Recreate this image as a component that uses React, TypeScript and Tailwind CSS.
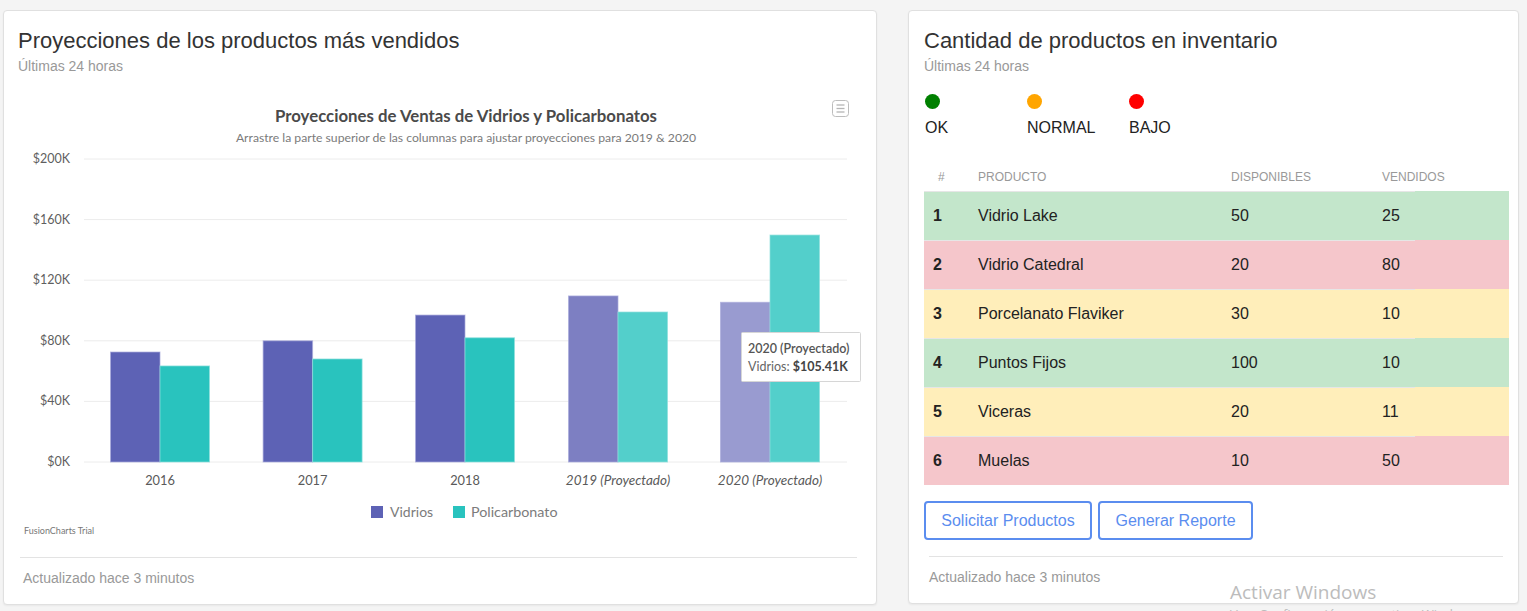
import React from "react";

const base = 372;
const k = 1.515;

type Cat = {
  label: string;
  c: number;
  v: number;
  p: number;
  italic: boolean;
  vf: string;
  pf: string;
};

const cats: Cat[] = [
  { label: "2016", c: 156, v: 72.6, p: 63.4, italic: false, vf: "#5d62b5", pf: "#29c3be" },
  { label: "2017", c: 308.6, v: 80, p: 68, italic: false, vf: "#5d62b5", pf: "#29c3be" },
  { label: "2018", c: 461, v: 97, p: 82, italic: false, vf: "#5d62b5", pf: "#29c3be" },
  { label: "2019 (Proyectado)", c: 614, v: 109.6, p: 99, italic: true, vf: "#7d7fc2", pf: "#53cfcb" },
  { label: "2020 (Proyectado)", c: 766, v: 105.41, p: 149.8, italic: true, vf: "#999bd0", pf: "#53cfcb" },
];

const ticks = [200, 160, 120, 80, 40, 0];

function Chart() {
  const font = "Lato, 'Open Sans', sans-serif";
  return (
    <svg width={872} height={455} className="block" style={{ fontFamily: font }}>
      <text x={462} y={32} textAnchor="middle" fontSize={16.8} fontWeight={700} fill="#4a4a4a">
        Proyecciones de Ventas de Vidrios y Policarbonatos
      </text>
      <text x={462} y={52} textAnchor="middle" fontSize={12.2} fill="#7b7b7b">
        Arrastre la parte superior de las columnas para ajustar proyecciones para 2019 &amp; 2020
      </text>
      {/* menu icon */}
      <rect x={828.5} y={10.5} width={16} height={16} rx={3} fill="#fff" stroke="#bdbdbd" />
      <line x1={832.5} x2={840.5} y1={15} y2={15} stroke="#b5b5b5" strokeWidth={1.3} />
      <line x1={832.5} x2={840.5} y1={18.5} y2={18.5} stroke="#b5b5b5" strokeWidth={1.3} />
      <line x1={832.5} x2={840.5} y1={22} y2={22} stroke="#b5b5b5" strokeWidth={1.3} />
      {ticks.map((t) => {
        const y = base - t * k;
        return (
          <g key={t}>
            <line x1={80} x2={843} y1={y} y2={y} stroke="#ececec" strokeWidth={1} />
            <text x={66} y={y + 4} textAnchor="end" fontSize={12.5} fill="#5f5f5f">
              ${t}K
            </text>
          </g>
        );
      })}
      {cats.map((c) => (
        <g key={c.label}>
          <rect
            x={c.c - 49.5}
            y={base - c.v * k}
            width={49.5}
            height={c.v * k}
            fill={c.vf}
            stroke="#a9abdc"
            strokeOpacity={0.7}
            strokeWidth={1}
          />
          <rect
            x={c.c}
            y={base - c.p * k}
            width={49.5}
            height={c.p * k}
            fill={c.pf}
            stroke="#8fe0dd"
            strokeOpacity={0.7}
            strokeWidth={1}
          />
          <text
            x={c.c}
            y={394.5}
            textAnchor="middle"
            fontSize={c.italic ? 13.5 : 12.8}
            fill="#5a5a5a"
            fontStyle={c.italic ? "italic" : "normal"}
          >
            {c.label}
          </text>
        </g>
      ))}
      {/* legend */}
      <rect x={367} y={416} width={12} height={12} fill="#5d62b5" />
      <text x={386} y={427} fontSize={14} fill="#7c7c7c">
        Vidrios
      </text>
      <rect x={449} y={416} width={12} height={12} fill="#29c3be" />
      <text x={467} y={427} fontSize={14.3} fill="#7c7c7c">
        Policarbonato
      </text>
      <text x={20} y={444} fontSize={9} fill="#777">
        FusionCharts Trial
      </text>
      {/* tooltip */}
      <rect x={737.5} y={242.5} width={119} height={49} fill="#fff" stroke="#d6d6d6" rx={1} />
      <text x={744} y={263} fontSize={12.5} fontWeight={600} fill="#555">
        2020 (Proyectado)
      </text>
      <text x={744} y={281} fontSize={12.5} fill="#666">
        Vidrios: <tspan fontWeight={700} fill="#444">$105.41K</tspan>
      </text>
    </svg>
  );
}

type Row = { n: number; name: string; disp: string; vend: string; bg: string };

const rows: Row[] = [
  { n: 1, name: "Vidrio Lake", disp: "50", vend: "25", bg: "bg-[#c3e6cb]" },
  { n: 2, name: "Vidrio Catedral", disp: "20", vend: "80", bg: "bg-[#f5c6cb]" },
  { n: 3, name: "Porcelanato Flaviker", disp: "30", vend: "10", bg: "bg-[#ffeeba]" },
  { n: 4, name: "Puntos Fijos", disp: "100", vend: "10", bg: "bg-[#c3e6cb]" },
  { n: 5, name: "Viceras", disp: "20", vend: "11", bg: "bg-[#ffeeba]" },
  { n: 6, name: "Muelas", disp: "10", vend: "50", bg: "bg-[#f5c6cb]" },
];

export default function App() {
  return (
    <div
      className="relative w-[1527px] h-[611px] overflow-hidden bg-[#f4f4f4] flex items-start pt-[10px] pl-[3px] gap-[31px] text-[#333]"
      style={{ fontFamily: "'Liberation Sans', Arial, sans-serif" }}
    >
      {/* Left card */}
      <div className="w-[874px] h-[595px] bg-white border border-[#e0e0e0] rounded-[4px] shadow-[0_1px_2px_rgba(0,0,0,0.05)] flex flex-col">
        <div className="h-[79px] pl-[14px] pt-[17px]">
          <div className="text-[22px] leading-[26px] text-[#333]">Proyecciones de los productos más vendidos</div>
          <div className="mt-[2px] text-[14px] leading-[20px] text-[#999]">Últimas 24 horas</div>
        </div>
        <Chart />
        <div className="mt-[12px] ml-[16px] mr-[19px] h-px bg-[#e3e3e3]" />
        <div className="pt-[10px] pl-[19px] text-[14px] leading-[20px] text-[#999]">Actualizado hace 3 minutos</div>
      </div>

      {/* Right card */}
      <div className="w-[611px] h-[594px] bg-white border border-[#e0e0e0] rounded-[4px] shadow-[0_1px_2px_rgba(0,0,0,0.05)] flex flex-col px-[15px]">
        <div className="pt-[17px]">
          <div className="text-[22px] leading-[26px] text-[#333]">Cantidad de productos en inventario</div>
          <div className="mt-[2px] text-[14px] leading-[20px] text-[#999]">Últimas 24 horas</div>
        </div>
        <div className="mt-[18px] flex">
          {[
            { c: "bg-[#008000]", l: "OK" },
            { c: "bg-[#ffa500]", l: "NORMAL" },
            { c: "bg-[#ff0000]", l: "BAJO" },
          ].map((d) => (
            <div key={d.l} className="w-[102px] pl-[1px]">
              <div className={`w-[15px] h-[15px] rounded-full ${d.c}`} />
              <div className="mt-[10px] text-[16px] leading-[18px] text-[#222]">{d.l}</div>
            </div>
          ))}
        </div>
        <div className="mt-[23px] w-[585px]">
          <div className="flex h-[31px] items-center pt-[2px] text-[12px] text-[#999] uppercase">
            <div className="w-[40px] pl-[14px]">#</div>
            <div className="w-[253px] pl-[14px]">Producto</div>
            <div className="w-[151px] pl-[14px]">Disponibles</div>
            <div className="w-[47px] pl-[14px] whitespace-nowrap">Vendidos</div>
          </div>
          {rows.map((r) => (
            <div key={r.n} className={`flex h-[49px] ${r.bg} text-[16px] text-[#222]`}>
              <div className="w-[40px] pl-[9px] border-t border-[#e6e6e6] flex items-center font-bold">{r.n}</div>
              <div className="w-[253px] pl-[14px] border-t border-[#e6e6e6] flex items-center">{r.name}</div>
              <div className="w-[151px] pl-[14px] border-t border-[#e6e6e6] flex items-center">{r.disp}</div>
              <div className="w-[47px] pl-[14px] border-t border-[#e6e6e6] flex items-center">{r.vend}</div>
              <div className="flex-1" />
            </div>
          ))}
        </div>
        <div className="mt-[16px] flex gap-[6px]">
          <button className="w-[168px] h-[39px] border-2 border-[#5b8def] rounded-[4px] text-[16px] text-[#5b8def] bg-white">
            Solicitar Productos
          </button>
          <button className="w-[155px] h-[39px] border-2 border-[#5b8def] rounded-[4px] text-[16px] text-[#5b8def] bg-white">
            Generar Reporte
          </button>
        </div>
        <div className="mt-[16px] ml-[5px] mr-0 h-px bg-[#e3e3e3]" />
        <div className="pt-[10px] pl-[5px] text-[14px] leading-[20px] text-[#999]">Actualizado hace 3 minutos</div>
      </div>

      {/* Windows watermark */}
      <div
        className="absolute left-[1230px] top-[580px] text-[19px] leading-[24px] text-[#bcbcbc] pointer-events-none"
        style={{ fontFamily: "'Open Sans', sans-serif" }}
      >
        Activar Windows
      </div>
      <div
        className="absolute left-[1230px] top-[605px] text-[13px] leading-[18px] text-[#bcbcbc] pointer-events-none whitespace-nowrap"
        style={{ fontFamily: "'Open Sans', sans-serif" }}
      >
        Ve a Configuración para activar Windows.
      </div>
    </div>
  );
}
